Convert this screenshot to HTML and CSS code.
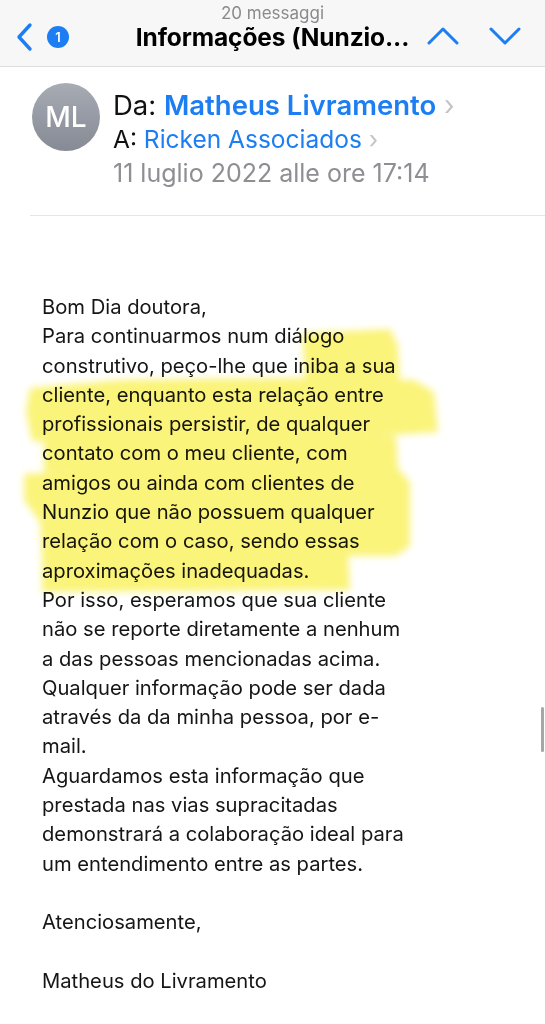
FILE: index.html
```html
<!DOCTYPE html>
<html lang="pt">
<head>
    <meta charset="UTF-8">
    <meta name="viewport" content="width=device-width, initial-scale=1.0">
    <title>Informações (Nunzio...)</title>
    <link rel="stylesheet" href="styles.css">
</head>
<body>
    <div class="page">
        <header class="topbar">
            <div class="nav-left">
                <svg class="back" width="20" height="30" viewBox="0 0 20 30">
                    <path d="M15 3 L4 15 L15 27" fill="none" stroke="#1c7ef2" stroke-width="3.4" stroke-linecap="round" stroke-linejoin="round"/>
                </svg>
                <span class="badge">1</span>
            </div>
            <div class="title-block">
                <div class="count">20 messaggi</div>
                <div class="title">Informações (Nunzio...</div>
            </div>
            <div class="nav-right">
                <svg width="32" height="18" viewBox="0 0 32 18">
                    <path d="M2 16 L16 2 L30 16" fill="none" stroke="#1c7ef2" stroke-width="3" stroke-linecap="round" stroke-linejoin="round"/>
                </svg>
                <svg width="32" height="18" viewBox="0 0 32 18">
                    <path d="M2 2 L16 16 L30 2" fill="none" stroke="#1c7ef2" stroke-width="3" stroke-linecap="round" stroke-linejoin="round"/>
                </svg>
            </div>
        </header>

        <section class="sender">
            <div class="avatar">ML</div>
            <div class="meta">
                <div class="from">Da: <span class="name">Matheus Livramento</span> <span class="chev">&#x203A;</span></div>
                <div class="to">A: <span class="link">Ricken Associados</span> <span class="chev">&#x203A;</span></div>
                <div class="date">11 luglio 2022 alle ore 17:14</div>
            </div>
        </section>
        <div class="rule"></div>

        <div class="message">
            <p>Bom Dia doutora,<br>
            Para continuarmos num diálogo<br>
            construtivo, peço-lhe que iniba a sua<br>
            cliente, enquanto esta relação entre<br>
            profissionais persistir, de qualquer<br>
            contato com o meu cliente, com<br>
            amigos ou ainda com clientes de<br>
            Nunzio que não possuem qualquer<br>
            relação com o caso, sendo essas<br>
            aproximações inadequadas.<br>
            Por isso, esperamos que sua cliente<br>
            não se reporte diretamente a nenhum<br>
            a das pessoas mencionadas acima.<br>
            Qualquer informação pode ser dada<br>
            através da da minha pessoa, por e-<br>
            mail.<br>
            Aguardamos esta informação que<br>
            prestada nas vias supracitadas<br>
            demonstrará a colaboração ideal para<br>
            um entendimento entre as partes.</p>
            <p>Atenciosamente,</p>
            <p>Matheus do Livramento</p>
        </div>

        <!-- marker strokes drawn over the text -->
        <svg class="marker" width="545" height="620" viewBox="0 0 545 620">
            <defs>
                <filter id="soft" x="-10%" y="-10%" width="120%" height="120%">
                    <feGaussianBlur stdDeviation="3.5"/>
                </filter>
            </defs>
            <g fill="#f9f158" filter="url(#soft)">
                <polygon points="302,333 390,329 398,345 400,388 306,388"/>
                <polygon points="30,388 120,380 300,378 414,380 434,392 438,432 300,441 120,446 32,441 26,412"/>
                <polygon points="44,440 396,436 398,470 44,472"/>
                <polygon points="24,474 200,465 394,464 410,482 410,546 396,556 42,556 40,522 24,500"/>
                <polygon points="42,556 348,553 350,590 42,592"/>
            </g>
        </svg>

        <div class="scrollbar"></div>
    </div>
</body>
</html>
```

FILE: styles.css
```css
body {
    margin: 0;
    font-family: Inter, "Noto Sans", sans-serif;
    background: #ffffff;
    color: #111111;
}

.page {
    position: relative;
    width: 545px;
    min-height: 1024px;
}

.topbar {
    height: 67px;
    box-sizing: border-box;
    background: #f7f7f7;
    border-bottom: 1px solid #dedede;
    display: grid;
    grid-template-columns: 1fr auto 1fr;
}

.nav-left {
    display: flex;
    align-items: center;
    gap: 12px;
    padding-left: 15px;
    padding-top: 8px;
}

.badge {
    width: 22px;
    height: 22px;
    border-radius: 50%;
    background: #1c7ef2;
    color: #ffffff;
    font-size: 13px;
    font-weight: 600;
    display: flex;
    align-items: center;
    justify-content: center;
}

.title-block {
    display: flex;
    flex-direction: column;
    align-items: center;
    padding-top: 4px;
}

.count {
    font-size: 17px;
    line-height: 19px;
    color: #8a8a8e;
}

.title {
    font-size: 24.5px;
    font-weight: 700;
    line-height: 28px;
    letter-spacing: -0.1px;
    color: #000000;
}

.nav-right {
    display: flex;
    align-items: center;
    justify-content: flex-end;
    gap: 30px;
    padding-right: 24px;
    padding-top: 6px;
}

.sender {
    display: flex;
    gap: 13px;
    padding: 16px 0 0 32px;
}

.avatar {
    width: 68px;
    height: 68px;
    border-radius: 50%;
    background: linear-gradient(#a7abb4, #868a94);
    color: #ffffff;
    font-size: 28px;
    font-weight: 500;
    display: flex;
    align-items: center;
    justify-content: center;
    flex-shrink: 0;
}

.meta {
    padding-top: 5px;
}

.from {
    font-size: 27.5px;
    line-height: 34px;
}

.to {
    font-size: 24.5px;
    line-height: 34px;
}

.date {
    font-size: 25px;
    line-height: 34px;
    color: #8e8e93;
}

.name {
    color: #1c7ef2;
    font-weight: 600;
}

.link {
    color: #1c7ef2;
}

.chev {
    color: #c4c4c7;
    font-weight: 400;
}

.rule {
    height: 1px;
    background: #e6e6e6;
    margin: 25px 0 0 30px;
}

.message {
    padding: 76px 0 40px 42px;
    font-size: 20.2px;
    line-height: 29.3px;
    color: #151515;
}

.message p {
    margin: 0 0 29.3px;
}

.marker {
    position: absolute;
    top: 0;
    left: 0;
    mix-blend-mode: multiply;
    opacity: 0.8;
    pointer-events: none;
}

.scrollbar {
    position: absolute;
    top: 707px;
    right: 1px;
    width: 3px;
    height: 45px;
    border-radius: 2px;
    background: #a6a6a6;
}
```
